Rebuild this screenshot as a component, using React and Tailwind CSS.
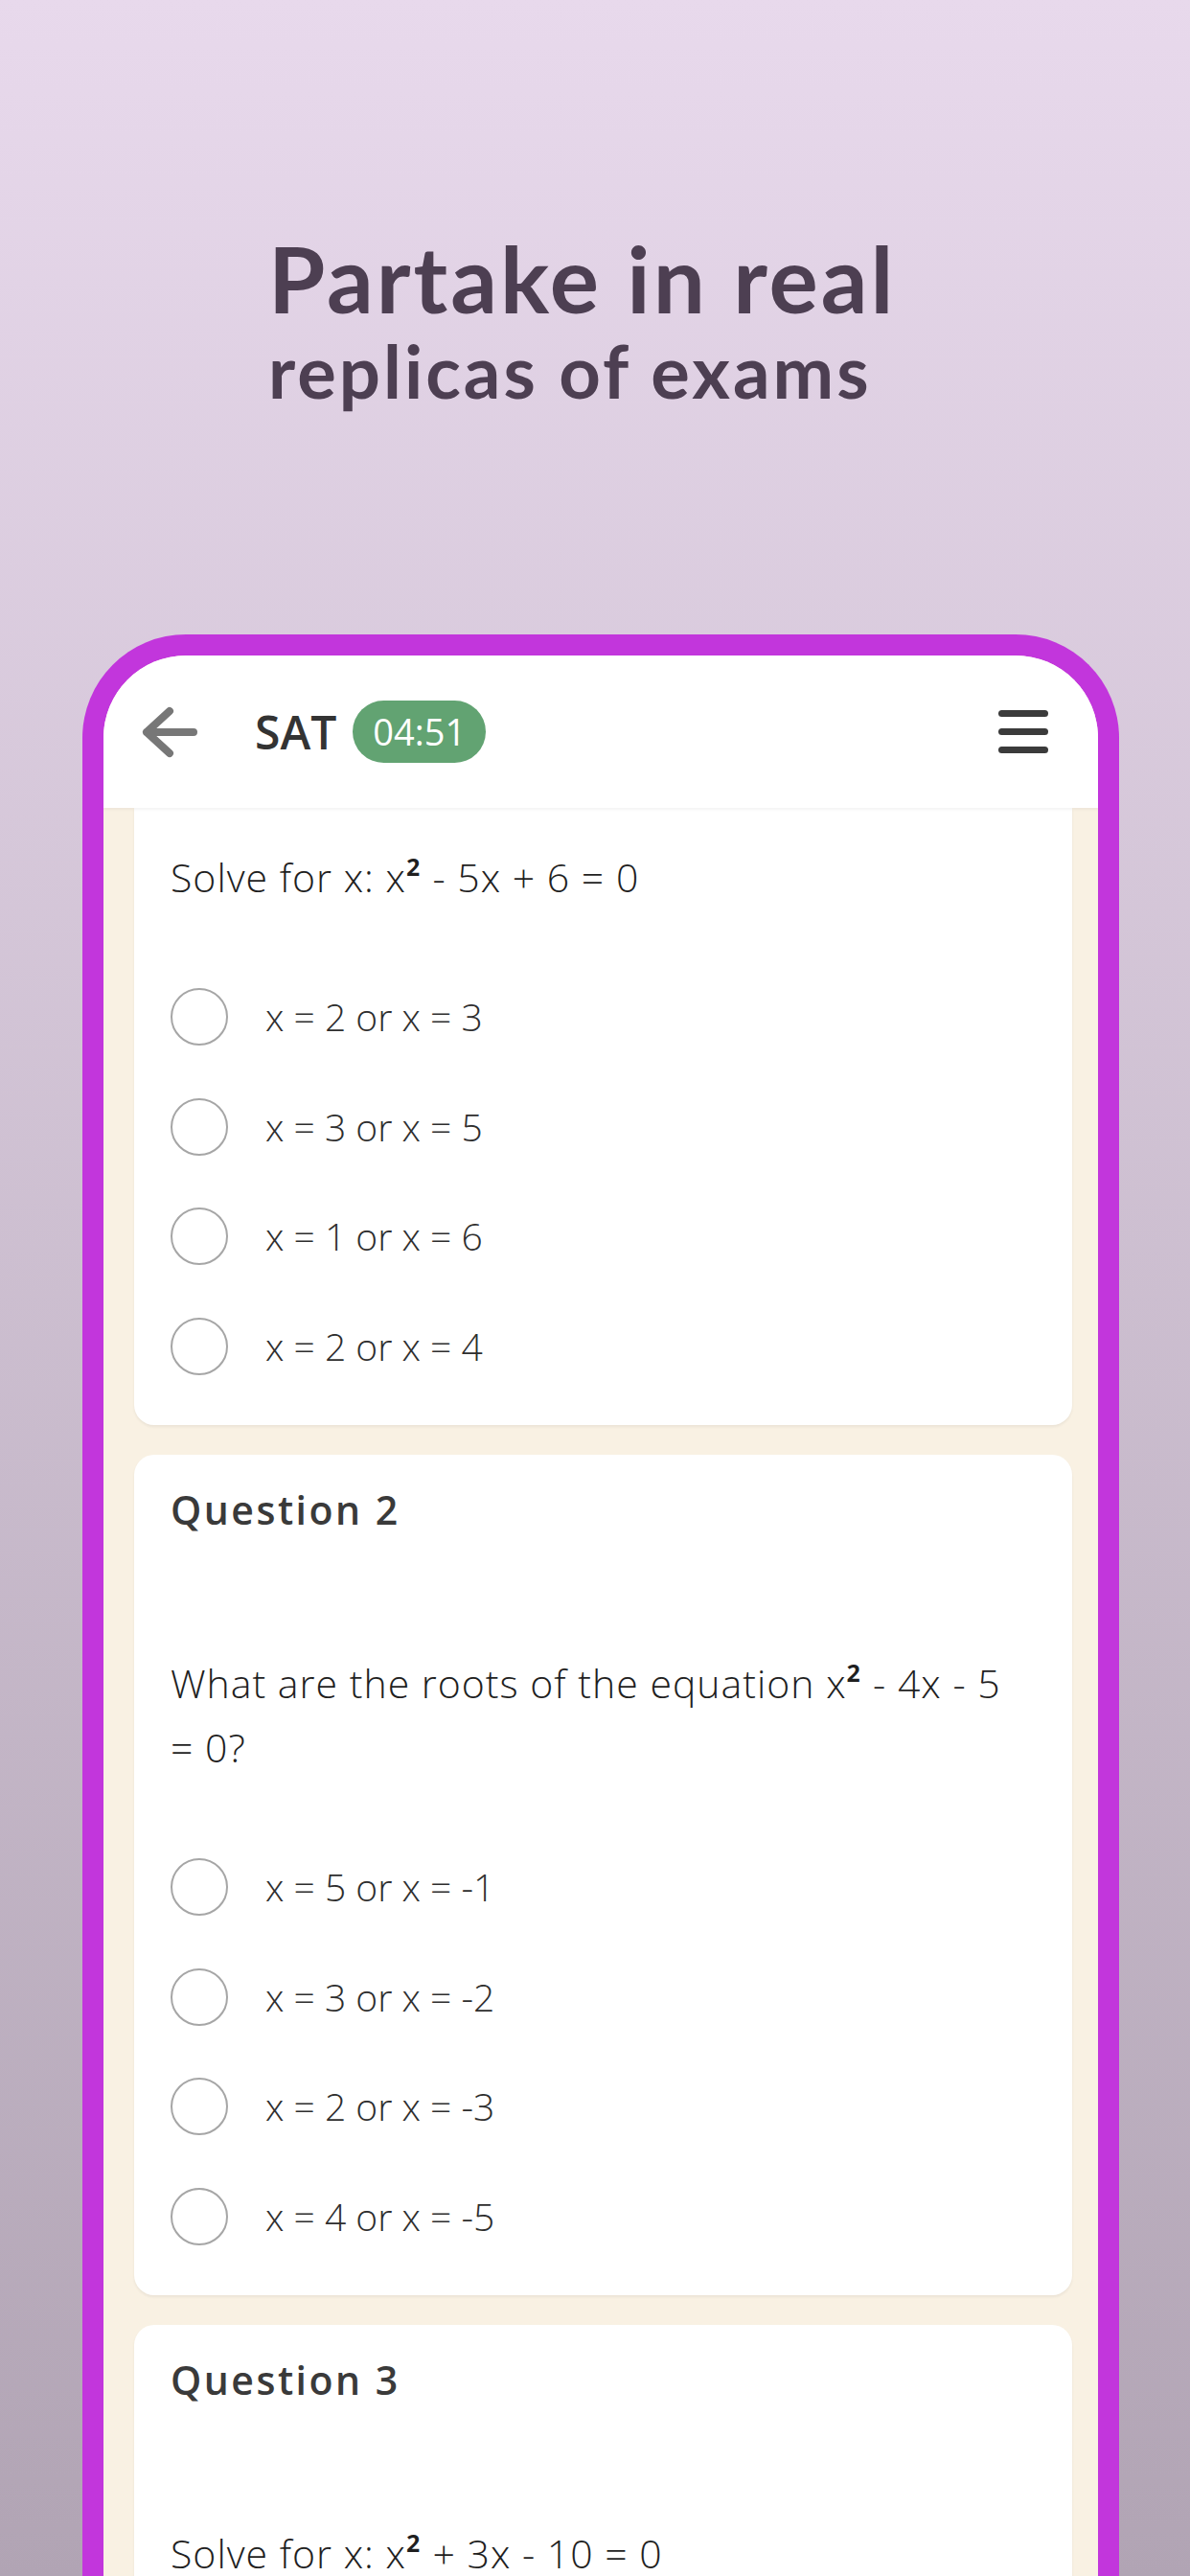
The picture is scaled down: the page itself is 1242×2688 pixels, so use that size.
import React from "react";

const questions = [
  {
    title: "Question 1",
    pre: "Solve for x: x",
    post: " - 5x + 6 = 0",
    options: ["x = 2 or x = 3", "x = 3 or x = 5", "x = 1 or x = 6", "x = 2 or x = 4"],
  },
  {
    title: "Question 2",
    pre: "What are the roots of the equation x",
    post: " - 4x - 5",
    end: "= 0?",
    options: ["x = 5 or x = -1", "x = 3 or x = -2", "x = 2 or x = -3", "x = 4 or x = -5"],
  },
  {
    title: "Question 3",
    pre: "Solve for x: x",
    post: " + 3x - 10 = 0",
    options: ["x = 2 or x = -5", "x = 5 or x = -2", "x = 1 or x = -10", "x = 10 or x = -1"],
  },
];

const bodyFont = { fontFamily: "'Open Sans', 'Liberation Sans', sans-serif" };

function BackArrow() {
  return (
    <svg width="64" height="56" viewBox="0 0 64 56" fill="none">
      <path
        d="M56 28H7M31 6L7 28l24 22"
        stroke="#777777"
        strokeWidth="8"
        strokeLinecap="round"
        strokeLinejoin="round"
      />
    </svg>
  );
}

// first card is scrolled up under the header, so its title is out of view
function QuestionCard({ q, scrolled }) {
  return (
    <div
      className={
        scrolled
          ? "bg-white rounded-b-[21px] shadow-[0_2px_3px_rgba(0,0,0,0.06)] pt-[39px] pb-[25px] px-[38px]"
          : "bg-white rounded-[21px] shadow-[0_2px_3px_rgba(0,0,0,0.06)] pt-[24px] pb-[25px] px-[38px]"
      }
    >
      {!scrolled && (
        <div className="mb-[114px] text-[41px] leading-[67px] font-semibold tracking-[2.5px] text-[#3a3a3a]">
          {q.title}
        </div>
      )}
      <div className="text-[41px] leading-[67px] font-light tracking-[1px] text-[#1f1f1f] whitespace-nowrap">
        {q.pre}
        <span className="font-semibold">²</span>
        {q.post}
        {q.end && (
          <>
            <br />
            {q.end}
          </>
        )}
      </div>
      <div className="mt-[55px] flex flex-col">
        {q.options.map((o) => (
          <div key={o} className="h-[114.5px] flex items-center">
            <div className="w-[60px] h-[60px] rounded-full border-2 border-[#a6a6a6]" />
            <span className="ml-[39px] text-[39px] font-light text-[#2e2e2e]">{o}</span>
          </div>
        ))}
      </div>
    </div>
  );
}

export default function App() {
  return (
    <div className="h-[2688px] overflow-hidden bg-gradient-to-b from-[#e8d9ec] to-[#b1a4b4]">
      {/* headline */}
      <div
        className="pt-[242px] pl-[280px] text-[#4d3f52] font-bold"
        style={{ fontFamily: "Lato, 'Open Sans', sans-serif" }}
      >
        <div className="text-[96px] leading-[96px] tracking-[3px]">Partake in real</div>
        <div className="mt-[9px] text-[76px] leading-[80px] tracking-[3px]">replicas of exams</div>
      </div>

      {/* phone, runs off the bottom of the shot */}
      <div
        className="mt-[235px] ml-[86px] w-[1082px] h-[2026px] rounded-t-[108px] border-[22px] border-b-0 border-[#c236dc] bg-[#f9f1e3] overflow-hidden"
        style={bodyFont}
      >
        <div className="relative z-10 h-[159px] bg-white flex items-center pl-[38px] pr-[52px] shadow-[0_2px_3px_rgba(0,0,0,0.05)]">
          <BackArrow />
          <span className="ml-[56px] text-[48px] font-semibold text-[#333333]">SAT</span>
          <span className="ml-[17px] h-[65px] px-[21px] rounded-full bg-[#62a372] text-white text-[38px] flex items-center">
            04:51
          </span>
          <div className="ml-auto flex flex-col gap-[12px]">
            <div className="w-[52px] h-[7px] rounded-full bg-[#3b3b3b]" />
            <div className="w-[52px] h-[7px] rounded-full bg-[#3b3b3b]" />
            <div className="w-[52px] h-[7px] rounded-full bg-[#3b3b3b]" />
          </div>
        </div>
        <div className="pl-[32px] pr-[27px] flex flex-col gap-[31px]">
          {questions.map((q, i) => (
            <QuestionCard key={q.title} q={q} scrolled={i === 0} />
          ))}
        </div>
      </div>
    </div>
  );
}
